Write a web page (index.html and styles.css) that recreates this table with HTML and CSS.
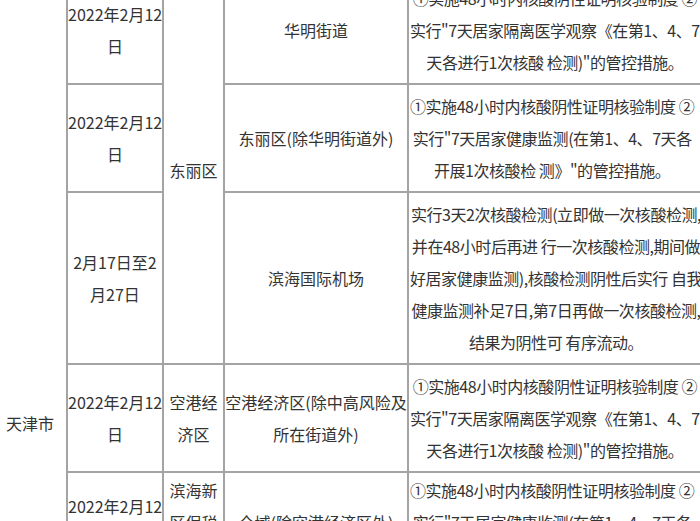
FILE: index.html
```html
<!DOCTYPE html>
<html lang="zh-CN">
<head>
<meta charset="utf-8">
<title>天津市 管控措施</title>
<link rel="stylesheet" href="styles.css">
</head>
<body>
<div class="viewport">
  <div class="sheet">
    <div class="cell city">天津市</div>

    <div class="cell">2022年2月12<br>日</div>
    <div class="cell district-span">东丽区</div>
    <div class="cell">华明街道</div>
    <div class="cell measure"><div>①实施48小时内核酸阴性证明核验制度 ②<br>实行&quot;7天居家隔离医学观察《在第1、4、7<br>天各进行1次核酸 检测)&quot;的管控措施。</div></div>

    <div class="cell">2022年2月12<br>日</div>
    <div class="cell">东丽区(除华明街道外)</div>
    <div class="cell measure"><div>①实施48小时内核酸阴性证明核验制度 ②<br>实行&quot;7天居家健康监测(在第1、4、7天各<br>开展1次核酸检 测》&quot;的管控措施。</div></div>

    <div class="cell">2月17日至2<br>月27日</div>
    <div class="cell">滨海国际机场</div>
    <div class="cell measure"><div>实行3天2次核酸检测(立即做一次核酸检测,<br>并在48小时后再进 行一次核酸检测,期间做<br>好居家健康监测),核酸检测阴性后实行 自我<br>健康监测补足7日,第7日再做一次核酸检测,<br>结果为阴性可 有序流动。</div></div>

    <div class="cell">2022年2月12<br>日</div>
    <div class="cell">空港经<br>济区</div>
    <div class="cell">空港经济区(除中高风险及<br>所在街道外)</div>
    <div class="cell measure"><div>①实施48小时内核酸阴性证明核验制度 ②<br>实行&quot;7天居家隔离医学观察《在第1、4、7<br>天各进行1次核酸 检测)&quot;的管控措施。</div></div>

    <div class="cell">2022年2月12<br>日</div>
    <div class="cell">滨海新<br>区保税<br>区</div>
    <div class="cell">全域(除空港经济区外)</div>
    <div class="cell measure"><div>①实施48小时内核酸阴性证明核验制度 ②<br>实行&quot;7天居家健康监测(在第1、4、7天各<br>开展1次核酸检 测》&quot;的管控措施。</div></div>
  </div>
</div>
</body>
</html>
```

FILE: styles.css
```css
html, body {
  margin: 0;
  padding: 0;
  background: #ffffff;
  overflow: hidden;
}

.viewport {
  width: 700px;
  height: 521px;
  overflow: hidden;
  background: #ffffff;
}

.sheet {
  display: grid;
  width: max-content;
  margin: -25px 0 0 -8px;
  padding: 2px;
  gap: 2px;
  background: #a4a4a4;
  grid-template-columns: 72px 94px 59px 182px 300px;
  grid-template-rows: 106px 106px 170px 106px 98px;
  font-family: "Noto Sans CJK SC", "Noto Sans", sans-serif;
  font-size: 16px;
  line-height: 32px;
  color: #333333;
}

.cell {
  background: #ffffff;
  display: grid;
  align-content: center;
  text-align: center;
  white-space: nowrap;
}

.city {
  grid-row: 1 / span 5;
  grid-column: 1;
  align-content: start;
  padding-top: 430px;
}

.district-span {
  grid-row: span 3;
}

.measure {
  padding: 0 17px 0 1px;
  letter-spacing: -0.45px;
}
```
